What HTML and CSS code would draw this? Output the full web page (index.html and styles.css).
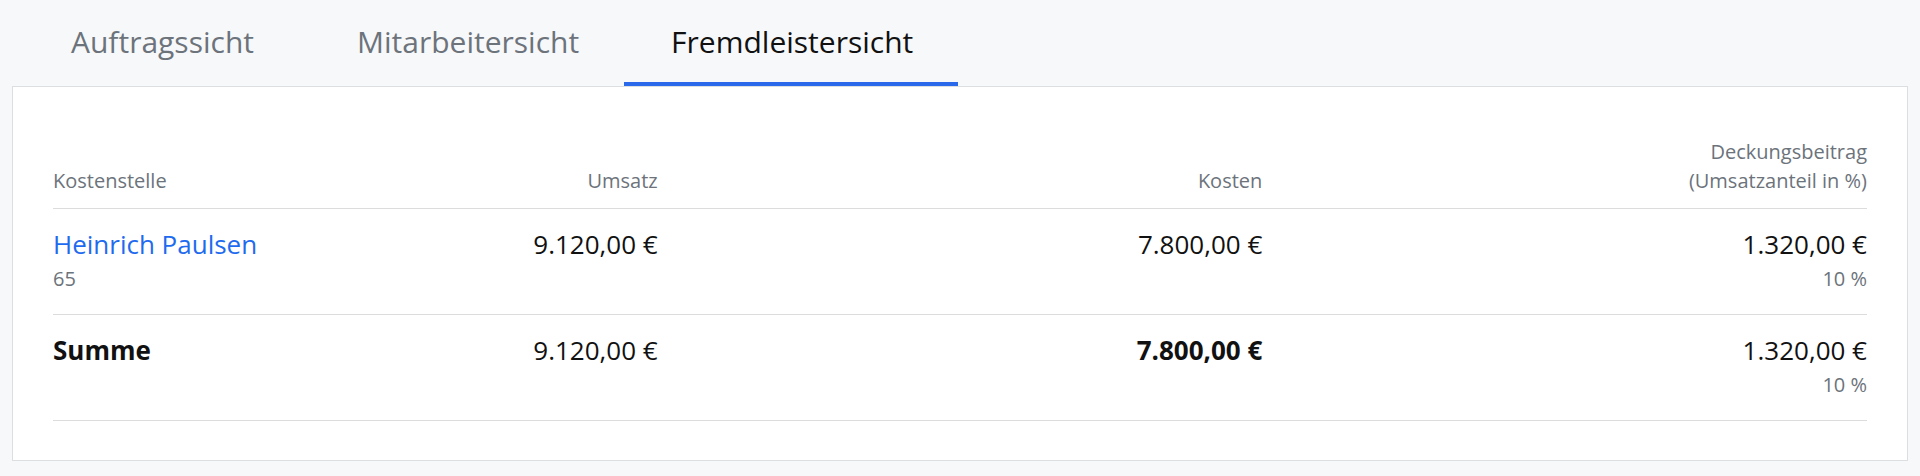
FILE: index.html
```html
<!DOCTYPE html>
<html lang="de">
<head>
    <meta charset="UTF-8">
    <meta name="viewport" content="width=device-width, initial-scale=1.0">
    <title>Fremdleistersicht</title>
    <link rel="stylesheet" href="styles.css">
</head>
<body>
    <nav class="tabs">
        <a class="tab" href="#">Auftragssicht</a>
        <a class="tab" href="#">Mitarbeitersicht</a>
        <a class="tab active" href="#">Fremdleistersicht</a>
    </nav>

    <section class="card">
        <table class="report">
            <colgroup>
                <col class="col-narrow">
                <col class="col-narrow">
                <col class="col-wide">
                <col class="col-wide">
            </colgroup>
            <thead>
                <tr>
                    <th class="left">Kostenstelle</th>
                    <th>Umsatz</th>
                    <th>Kosten</th>
                    <th>Deckungsbeitrag<br>(Umsatzanteil in %)</th>
                </tr>
            </thead>
            <tbody>
                <tr>
                    <td class="left">
                        <a class="main link" href="#">Heinrich Paulsen</a>
                        <div class="sub">65</div>
                    </td>
                    <td><div class="main">9.120,00 €</div></td>
                    <td><div class="main">7.800,00 €</div></td>
                    <td>
                        <div class="main">1.320,00 €</div>
                        <div class="sub">10 %</div>
                    </td>
                </tr>
                <tr class="total">
                    <td class="left"><div class="main bold">Summe</div></td>
                    <td><div class="main">9.120,00 €</div></td>
                    <td><div class="main bold">7.800,00 €</div></td>
                    <td>
                        <div class="main">1.320,00 €</div>
                        <div class="sub">10 %</div>
                    </td>
                </tr>
            </tbody>
        </table>
    </section>
</body>
</html>
```

FILE: styles.css
```css
body {
    margin: 0;
    padding: 0 12px;
    background-color: #f7f8fa;
    font-family: "Open Sans", "Noto Sans", sans-serif;
    color: #111;
}

/* tabs */
.tabs {
    display: flex;
    gap: 9px;
    padding: 19px 0 0 12px;
}
.tab {
    font-size: 30px;
    line-height: 45px;
    padding: 0 47px 18px;
    border-bottom: 4px solid transparent;
    color: #6c737b;
    text-decoration: none;
}
.tab.active {
    margin-left: -11px;
    padding-right: 45px;
    color: #111;
    border-bottom-color: #2a6aea;
}

/* card with table */
.card {
    background: #fff;
    border: 1px solid #dcdfe2;
    padding: 50px 40px 39px;
}
.report {
    width: 100%;
    border-collapse: collapse;
    table-layout: fixed;
}
.col-narrow { width: 16.667%; }
.col-wide { width: 33.333%; }

.report th {
    font-size: 20px;
    line-height: 29px;
    font-weight: 400;
    color: #6c737b;
    text-align: right;
    vertical-align: bottom;
    padding: 0 0 13px;
    border-bottom: 1px solid #dcdcdc;
}
.report td {
    text-align: right;
    vertical-align: top;
    padding: 16px 0 20px;
    border-bottom: 1px solid #dcdcdc;
}
.report .left {
    text-align: left;
}
.main {
    display: block;
    font-size: 26px;
    line-height: 39px;
}
.sub {
    font-size: 20px;
    line-height: 30px;
    color: #6c737b;
}
.link {
    color: #1f6bef;
    text-decoration: none;
}
.bold {
    font-weight: 700;
}
```
